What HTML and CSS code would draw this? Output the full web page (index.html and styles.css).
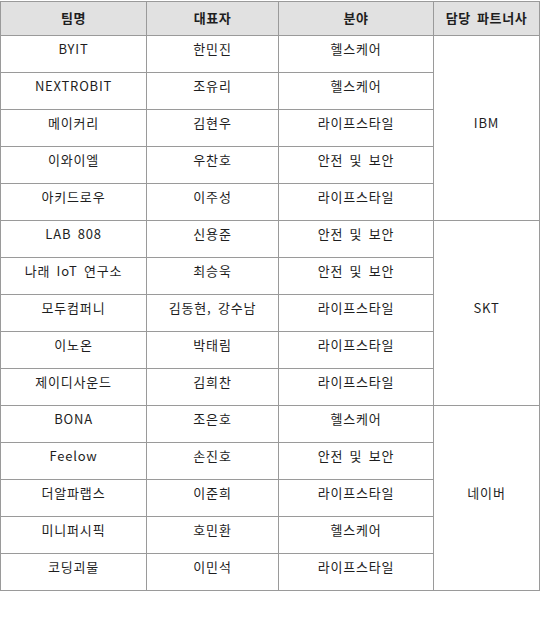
FILE: index.html
```html
<!DOCTYPE html>
<html lang="ko">
<head>
<meta charset="utf-8">
<link rel="stylesheet" href="styles.css">
</head>
<body>
<table class="teams">
  <colgroup>
    <col class="c1"><col class="c2"><col class="c3"><col class="c4">
  </colgroup>
  <thead>
    <tr><th>팀명</th><th>대표자</th><th>분야</th><th>담당 파트너사</th></tr>
  </thead>
  <tbody>
    <tr><td>BYIT</td><td>한민진</td><td>헬스케어</td><td class="partner" rowspan="5">IBM</td></tr>
    <tr><td>NEXTROBIT</td><td>조유리</td><td>헬스케어</td></tr>
    <tr><td>메이커리</td><td>김현우</td><td>라이프스타일</td></tr>
    <tr><td>이와이엘</td><td>우찬호</td><td>안전 및 보안</td></tr>
    <tr><td>아키드로우</td><td>이주성</td><td>라이프스타일</td></tr>
    <tr><td>LAB 808</td><td>신용준</td><td>안전 및 보안</td><td class="partner" rowspan="5">SKT</td></tr>
    <tr><td>나래 IoT 연구소</td><td>최승욱</td><td>안전 및 보안</td></tr>
    <tr><td>모두컴퍼니</td><td>김동현, 강수남</td><td>라이프스타일</td></tr>
    <tr><td>이노온</td><td>박태림</td><td>라이프스타일</td></tr>
    <tr><td>제이디사운드</td><td>김희찬</td><td>라이프스타일</td></tr>
    <tr><td>BONA</td><td>조은호</td><td>헬스케어</td><td class="partner" rowspan="5">네이버</td></tr>
    <tr><td>Feelow</td><td>손진호</td><td>안전 및 보안</td></tr>
    <tr><td>더알파랩스</td><td>이준희</td><td>라이프스타일</td></tr>
    <tr><td>미니퍼시픽</td><td>호민환</td><td>헬스케어</td></tr>
    <tr><td>코딩괴물</td><td>이민석</td><td>라이프스타일</td></tr>
  </tbody>
</table>
</body>
</html>
```

FILE: styles.css
```css
html, body {
  margin: 0;
  padding: 0;
  background: #ffffff;
}
body {
  font-family: "Noto Sans CJK KR", "Noto Sans", sans-serif;
  font-size: 13px;
  color: #1e1e1e;
}
.teams {
  border-collapse: collapse;
  table-layout: fixed;
  width: 539px;
  margin-top: 1px;
}
.c1 { width: 146px; }
.c2 { width: 132px; }
.c3 { width: 155px; }
.c4 { width: 106px; }
.teams th,
.teams td {
  border: 1px solid #9a9a9a;
  text-align: center;
  vertical-align: middle;
  padding: 0;
  line-height: 17px;
}
.teams th {
  background: #e1e1e1;
  font-weight: bold;
  height: 34px;
  padding-bottom: 2px;
  box-sizing: border-box;
  letter-spacing: 0.6px;
  word-spacing: 2px;
}
.teams td {
  height: 37px;
  box-sizing: border-box;
  padding: 4px 0 15px;
  letter-spacing: 0.8px;
  word-spacing: 2px;
}
```
